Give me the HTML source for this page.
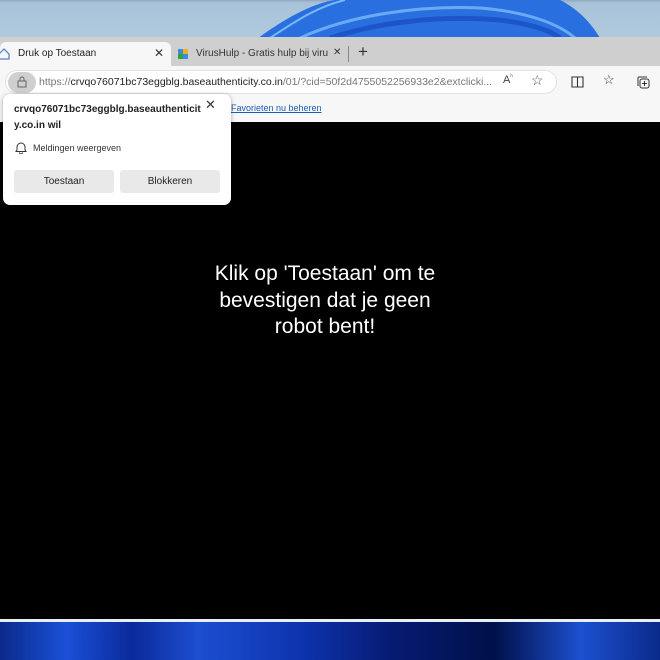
<!DOCTYPE html>
<html><head><meta charset="utf-8"><style>
*{margin:0;padding:0;box-sizing:border-box}
body{width:660px;height:660px;overflow:hidden;position:relative;font-family:"Liberation Sans",sans-serif;background:#000}
.abs{position:absolute}
</style></head><body>
<div class="abs" style="left:0;top:0;width:660px;height:38px;background:linear-gradient(#8fa9c0 0,#a8c3d9 3px,#b0c9dd 100%)"></div>
<svg class="abs" style="left:0;top:0" width="660" height="38">
<path d="M258 38 C290 15 315 3 335 0 L560 0 C580 10 592 25 600 38 Z" fill="#2a6fe0"/>
<path d="M300 38 C350 15 420 5 480 8 C530 12 560 25 575 38" stroke="#6aaaf5" stroke-width="3" fill="none"/>
<path d="M330 38 C380 22 440 15 500 20 C530 24 550 30 560 38" stroke="#1c55c8" stroke-width="5" fill="none"/>
<path d="M270 38 C300 18 320 6 345 0" stroke="#7ab8f8" stroke-width="2" fill="none"/>
</svg>
<div class="abs" style="left:0;top:37px;width:660px;height:29px;background:#cfcfcf"></div>
<div class="abs" style="left:0;top:42px;width:171px;height:26px;background:#f7f7f7;border-radius:6px 6px 0 0"></div>
<div class="abs" style="left:18px;top:48px;font-size:10px;color:#222">Druk op Toestaan</div>
<div class="abs" style="left:154px;top:46px;font-size:12px;color:#333">✕</div>
<svg class="abs" style="left:-2px;top:48px" width="12" height="12"><path d="M1 6 L6 1 L11 6 V11 H1Z" fill="none" stroke="#5a86c8" stroke-width="1.3"/></svg>
<svg class="abs" style="left:177px;top:48px" width="12" height="12"><rect x="1" y="1" width="5" height="5" fill="#3a8de0"/><rect x="6" y="1" width="5" height="5" fill="#f0b020"/><rect x="1" y="6" width="5" height="5" fill="#30a040"/><rect x="6" y="6" width="5" height="5" fill="#3a8de0"/></svg>
<div class="abs" style="left:196px;top:48px;font-size:10px;color:#333;white-space:nowrap;width:132px;overflow:hidden">VirusHulp - Gratis hulp bij virusse</div>
<div class="abs" style="left:333px;top:47px;font-size:10px;color:#333">✕</div>
<div class="abs" style="left:348px;top:46px;width:1px;height:16px;background:#888"></div>
<div class="abs" style="left:358px;top:42px;font-size:17px;color:#333">+</div>
<div class="abs" style="left:0;top:66px;width:660px;height:56px;background:#f7f7f7"></div>
<div class="abs" style="left:5px;top:70px;width:552px;height:24px;background:#fff;border:1px solid #e2e2e2;border-radius:12px"></div>
<div class="abs" style="left:8px;top:72px;width:28px;height:21px;background:#cfcfcf;border-radius:11px"></div>
<svg class="abs" style="left:16px;top:76px" width="12" height="12"><rect x="2" y="5" width="8" height="6" fill="none" stroke="#666"/><path d="M4 5V3a2 2 0 0 1 4 0v2" fill="none" stroke="#666"/></svg>
<div class="abs" style="left:39px;top:76px;font-size:10.5px;color:#222;white-space:nowrap;width:452px;overflow:hidden"><span style="color:#777">https://</span>crvqo76071bc73eggblg.baseauthenticity.co.in<span style="color:#777">/01/?cid=50f2d4755052256933e2&amp;extclicki...</span></div>
<div class="abs" style="left:503px;top:74px;font-size:11px;color:#444">A<sup style="font-size:6px">ʰ</sup></div>
<div class="abs" style="left:531px;top:72px;font-size:14px;color:#555">☆</div>
<svg class="abs" style="left:571px;top:76px" width="13" height="12"><path d="M1 1h11v10H1z M6.5 1v10" fill="none" stroke="#333" stroke-width="1.1"/></svg>
<div class="abs" style="left:603px;top:72px;font-size:13px;color:#333">☆</div>
<svg class="abs" style="left:637px;top:76px" width="13" height="13"><rect x="3" y="3" width="9" height="9" rx="2" fill="none" stroke="#333"/><path d="M1 10V2a1 1 0 0 1 1-1h8 M7.5 5v5 M5 7.5h5" fill="none" stroke="#333"/></svg>
<div class="abs" style="left:231px;top:103px;font-size:9px;color:#1a5fb4;text-decoration:underline">Favorieten nu beheren</div>
<div class="abs" style="left:0;top:619px;width:660px;height:3px;background:#e8eef5"></div>
<div class="abs" style="left:0;top:622px;width:660px;height:38px;background:linear-gradient(90deg,#0a2a8a 0,#1a50d8 10%,#0a2a9a 20%,#1c4ed0 30%,#0d35b0 45%,#061a70 60%,#00104a 75%,#1c50d0 88%,#0a2a8a 100%)"></div>
<div class="abs" style="left:165px;top:261px;width:320px;text-align:center;color:#fff;font-size:21px;line-height:26.5px">Klik op 'Toestaan' om te<br>bevestigen dat je geen<br>robot bent!</div>
<div class="abs" style="left:3px;top:94px;width:228px;height:111px;background:#fff;border-radius:7px;box-shadow:0 1px 4px rgba(0,0,0,.35)">
<div class="abs" style="left:11px;top:8px;width:190px;font-size:10px;font-weight:bold;color:#222;line-height:16px;word-break:break-all">crvqo76071bc73eggblg.baseauthenticity.co.in wil</div>
<div class="abs" style="left:202px;top:3px;font-size:13px;color:#333">✕</div>
<svg class="abs" style="left:12px;top:47px" width="12" height="13"><path d="M2 9V6a4 4 0 0 1 8 0v3l1 1.5H1Z M4.5 11.5a1.5 1.5 0 0 0 3 0" fill="none" stroke="#333"/></svg>
<div class="abs" style="left:30px;top:49px;font-size:9px;color:#333">Meldingen weergeven</div>
<div class="abs" style="left:11px;top:76px;width:100px;height:23px;background:#e9e9e9;border-radius:3px;font-size:10px;color:#222;text-align:center;line-height:23px">Toestaan</div>
<div class="abs" style="left:117px;top:76px;width:100px;height:23px;background:#e9e9e9;border-radius:3px;font-size:10px;color:#222;text-align:center;line-height:23px">Blokkeren</div>
</div>
</body></html>
